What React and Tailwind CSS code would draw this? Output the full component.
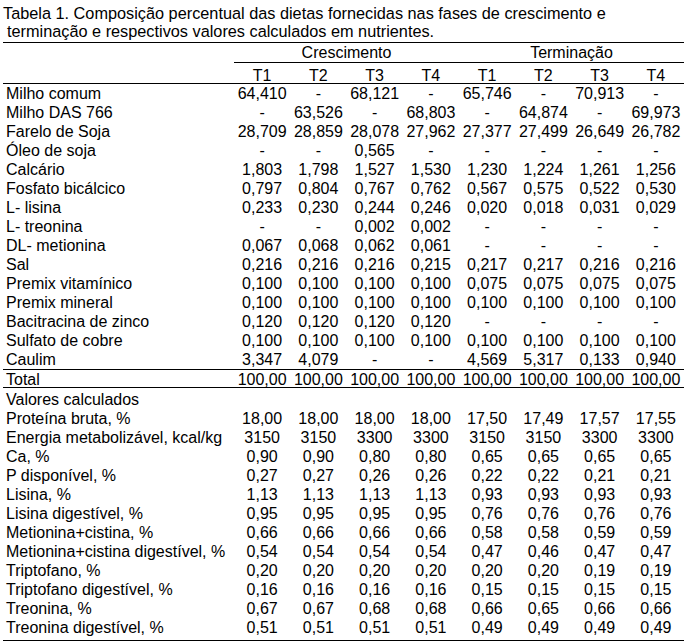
const upper = [
  ["Milho comum", ["64,410", "-", "68,121", "-", "65,746", "-", "70,913", "-"]],
  ["Milho DAS 766", ["-", "63,526", "-", "68,803", "-", "64,874", "-", "69,973"]],
  ["Farelo de Soja", ["28,709", "28,859", "28,078", "27,962", "27,377", "27,499", "26,649", "26,782"]],
  ["Óleo de soja", ["-", "-", "0,565", "-", "-", "-", "-", "-"]],
  ["Calcário", ["1,803", "1,798", "1,527", "1,530", "1,230", "1,224", "1,261", "1,256"]],
  ["Fosfato bicálcico", ["0,797", "0,804", "0,767", "0,762", "0,567", "0,575", "0,522", "0,530"]],
  ["L- lisina", ["0,233", "0,230", "0,244", "0,246", "0,020", "0,018", "0,031", "0,029"]],
  ["L- treonina", ["-", "-", "0,002", "0,002", "-", "-", "-", "-"]],
  ["DL- metionina", ["0,067", "0,068", "0,062", "0,061", "-", "-", "-", "-"]],
  ["Sal", ["0,216", "0,216", "0,216", "0,215", "0,217", "0,217", "0,216", "0,216"]],
  ["Premix vitamínico", ["0,100", "0,100", "0,100", "0,100", "0,075", "0,075", "0,075", "0,075"]],
  ["Premix mineral", ["0,100", "0,100", "0,100", "0,100", "0,100", "0,100", "0,100", "0,100"]],
  ["Bacitracina de zinco", ["0,120", "0,120", "0,120", "0,120", "-", "-", "-", "-"]],
  ["Sulfato de cobre", ["0,100", "0,100", "0,100", "0,100", "0,100", "0,100", "0,100", "0,100"]],
  ["Caulim", ["3,347", "4,079", "-", "-", "4,569", "5,317", "0,133", "0,940"]],
];

const lower = [
  ["Proteína bruta, %", ["18,00", "18,00", "18,00", "18,00", "17,50", "17,49", "17,57", "17,55"]],
  ["Energia metabolizável, kcal/kg", ["3150", "3150", "3300", "3300", "3150", "3150", "3300", "3300"]],
  ["Ca, %", ["0,90", "0,90", "0,80", "0,80", "0,65", "0,65", "0,65", "0,65"]],
  ["P disponível, %", ["0,27", "0,27", "0,26", "0,26", "0,22", "0,22", "0,21", "0,21"]],
  ["Lisina, %", ["1,13", "1,13", "1,13", "1,13", "0,93", "0,93", "0,93", "0,93"]],
  ["Lisina digestível, %", ["0,95", "0,95", "0,95", "0,95", "0,76", "0,76", "0,76", "0,76"]],
  ["Metionina+cistina, %", ["0,66", "0,66", "0,66", "0,66", "0,58", "0,58", "0,59", "0,59"]],
  ["Metionina+cistina digestível, %", ["0,54", "0,54", "0,54", "0,54", "0,47", "0,46", "0,47", "0,47"]],
  ["Triptofano, %", ["0,20", "0,20", "0,20", "0,20", "0,20", "0,20", "0,19", "0,19"]],
  ["Triptofano digestível, %", ["0,16", "0,16", "0,16", "0,16", "0,15", "0,15", "0,15", "0,15"]],
  ["Treonina, %", ["0,67", "0,67", "0,68", "0,68", "0,66", "0,65", "0,66", "0,66"]],
  ["Treonina digestível, %", ["0,51", "0,51", "0,51", "0,51", "0,49", "0,49", "0,49", "0,49"]],
];

const grid = "grid grid-cols-[231px_repeat(8,1fr)] items-center";

// rows are 19px; pb nudges the text up half a pixel per px
function Row({ label, values, className = "h-[19px] pb-[1px]" }) {
  return (
    <div className={`${grid} ${className}`}>
      <div className="pl-[3px] whitespace-nowrap">{label}</div>
      {values.map((v, i) => (
        <div key={i} className="text-center whitespace-nowrap">
          {v}
        </div>
      ))}
    </div>
  );
}

export default function App() {
  return (
    <div className="min-h-[644px] w-[685px] bg-white text-black text-[16px] leading-[19px] font-['Liberation_Sans',Arial,sans-serif]">
      <div className="pt-[4px] pl-[3px] text-[16.3px] leading-[18px]">
        <div>Tabela 1. Composição percentual das dietas fornecidas nas fases de crescimento e</div>
        <div className="pl-[4px]">terminação e respectivos valores calculados em nutrientes.</div>
      </div>

      <div className="mt-[2px] ml-[3px] w-[681px] border-t border-black">
        <div className={`${grid} h-[20px]`}>
          <div />
          <div className="col-span-4 h-full border-b border-black text-center">Crescimento</div>
          <div className="col-span-4 h-full border-b border-black text-center">Terminação</div>
        </div>
        <div className={`${grid} h-[21px] pt-[3px] border-b border-black`}>
          <div />
          {["T1", "T2", "T3", "T4", "T1", "T2", "T3", "T4"].map((t, i) => (
            <div key={i} className="text-center">
              {t}
            </div>
          ))}
        </div>

        {upper.map(([label, values]) => (
          <Row key={label} label={label} values={values} />
        ))}

        <Row
          label="Total"
          values={Array(8).fill("100,00")}
          className="h-[19px] border-y border-black"
        />

        <div className="pb-[3px] border-b border-black">
          <div className="h-[21px] flex items-center pl-[3px] pt-[1px]">Valores calculados</div>
          {lower.map(([label, values]) => (
            <Row key={label} label={label} values={values} />
          ))}
        </div>
      </div>
    </div>
  );
}
